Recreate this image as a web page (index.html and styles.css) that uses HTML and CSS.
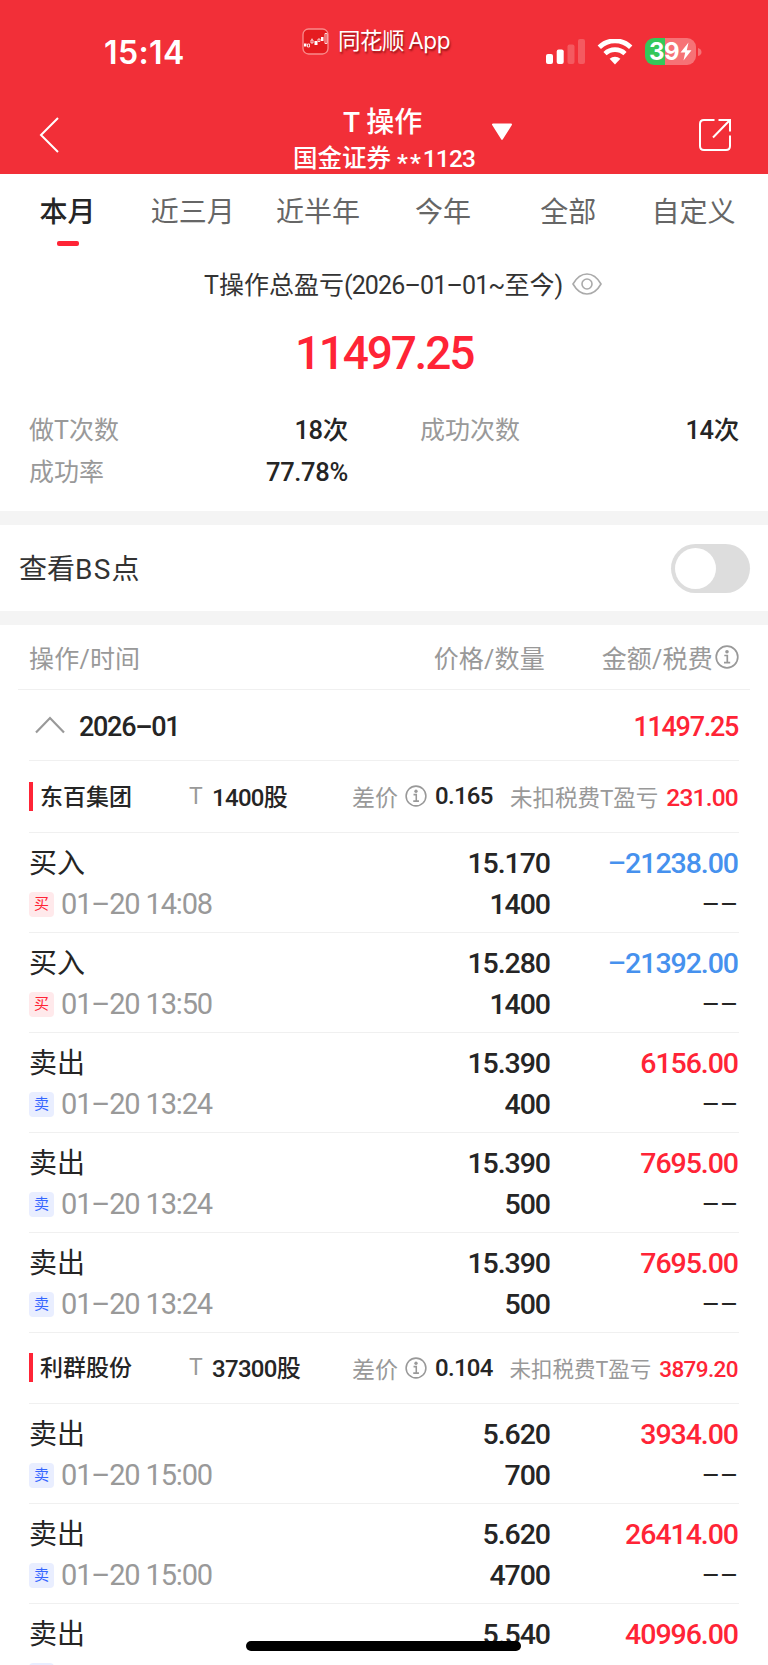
FILE: index.html
```html
<!DOCTYPE html>
<html lang="zh-CN">
<head>
    <meta charset="UTF-8">
    <meta name="viewport" content="width=device-width, initial-scale=1.0">
    <title>T操作</title>
    <link rel="stylesheet" href="styles.css">
</head>
<body>
    <svg class="defs" width="0" height="0">
        <symbol id="info" viewBox="0 0 24 24">
            <circle cx="12" cy="12" r="10.8" fill="none" stroke="currentColor" stroke-width="1.7"/>
            <circle cx="12" cy="6.8" r="1.8" fill="currentColor"/>
            <path d="M9.3 10.5h3v7M9 17.6h6.2" fill="none" stroke="currentColor" stroke-width="1.7"/>
        </symbol>
    </svg>

    <header class="header">
        <div class="status">
            <div class="time">15:14</div>
            <div class="app">
                <svg class="app-icon" width="27" height="27" viewBox="0 0 27 27">
                    <rect x="1" y="1" width="25" height="25" rx="5.5" fill="#e51c20" stroke="#f98b8b" stroke-width="1.3"/>
                    <path d="M2 15.500h2.500v3h-2.500zM12.500 13h3v4h-3zM19 9h2.500v4h-2.500z" fill="#fff"/>
                    <path d="M5.500 16h2v3h-2zM9 12h2v3h-2zM10 10.500v1.500M16 11h2v2.500h-2zM23 5.500h2v10h-2z" fill="none" stroke="#fff" stroke-width=".8"/>
                </svg>
                <span>同花顺 App</span>
            </div>
            <div class="signals">
                <svg width="40" height="26" viewBox="0 0 40 26">
                    <rect x="1" y="15" width="7" height="10" rx="2" fill="#fff"/>
                    <rect x="11.700" y="10.500" width="7" height="14.500" rx="2" fill="#fff"/>
                    <rect x="22.500" y="5.500" width="7" height="19.500" rx="2" fill="#f45a60"/>
                    <rect x="33" y="0" width="7" height="25" rx="2" fill="#f45a60"/>
                </svg>
                <svg class="wifi" width="36" height="26" viewBox="0 0 36 26">
                    <path d="M2.300 8.200a22.500 22.500 0 0 1 31.400 0" fill="none" stroke="#fff" stroke-width="4.800"/>
                    <path d="M8 14.600a14.500 14.500 0 0 1 20 0" fill="none" stroke="#fff" stroke-width="4.600"/>
                    <path d="M12.600 19.800a8 8 0 0 1 10.800 0L18 25.500z" fill="#fff"/>
                </svg>
                <div class="battery">
                    <span>39</span>
                    <svg width="12" height="19" viewBox="0 0 12 19"><path d="M8.500.5L.5 10.500h4.700L3.500 18.500l8-10.300H6.800z" fill="#fff"/></svg>
                </div>
                <svg class="battery-cap" width="4" height="10" viewBox="0 0 4 10"><path d="M0 1q3.500 1 3.500 4T0 9z" fill="#f67276"/></svg>
            </div>
        </div>
        <div class="nav">
            <svg class="back" width="22" height="38" viewBox="0 0 22 38"><path d="M20 2L3 19l17 17" fill="none" stroke="#fff" stroke-width="2"/></svg>
            <div class="nav-title">
                <h1>T 操作</h1>
                <p>国金证券 <span class="stars">**</span><span class="account">1123</span></p>
            </div>
            <svg class="caret" width="22" height="18" viewBox="0 0 22 18"><path d="M2 1.500h18L11 15.800z" fill="#fff" stroke="#fff" stroke-width="2" stroke-linejoin="round"/></svg>
            <svg class="share" width="34" height="34" viewBox="0 0 34 34"><path d="M16.500 2H6Q2 2 2 6v22q0 4 4 4h22q4 0 4-4V17.500M20.500 2H32v11.500M31.500 2.500L15 19.500" fill="none" stroke="#fff" stroke-width="2"/></svg>
        </div>
    </header>

    <nav class="tabs">
        <a class="active">本月</a>
        <a>近三月</a>
        <a>近半年</a>
        <a>今年</a>
        <a>全部</a>
        <a>自定义</a>
    </nav>

    <section class="summary">
        <div class="summary-title">
            <span>T操作总盈亏<span class="range">(2026–01–01~</span>至今)</span>
            <svg width="30" height="22" viewBox="0 0 30 22" fill="none" stroke="#aaa" stroke-width="1.600"><path d="M1 11C5 4 10 1 15 1s10 3 14 10c-4 7-9 10-14 10S5 18 1 11z"/><circle cx="15" cy="11" r="5"/></svg>
        </div>
        <div class="total">11497.25</div>
        <dl class="stats">
            <div><dt>做T次数</dt><dd>18次</dd></div>
            <div><dt>成功次数</dt><dd>14次</dd></div>
            <div><dt>成功率</dt><dd>77.78%</dd></div>
        </dl>
    </section>

    <section class="bs-row">
        <span>查看<span class="bs">BS</span>点</span>
        <div class="switch"></div>
    </section>

    <section class="list">
        <div class="list-head">
            <span>操作/时间</span>
            <span class="right">价格/数量</span>
            <span class="right">金额/税费<svg width="24" height="24"><use href="#info"/></svg></span>
        </div>

        <div class="month">
            <svg width="30" height="18" viewBox="0 0 30 18"><path d="M1 16.500L15 2l14 14.500" fill="none" stroke="#999" stroke-width="2.200"/></svg>
            <b>2026–01</b>
            <b class="red">11497.25</b>
        </div>

        <div class="stock">
            <span class="name">东百集团</span>
            <span class="t">T</span>
            <span class="qty">1400股</span>
            <span class="diff">差价<svg width="22" height="22"><use href="#info"/></svg></span>
            <span class="diff-num">0.165</span>
            <span class="profit">未扣税费T盈亏<b>231.00</b></span>
        </div>
        <div class="trade">
            <span class="op">买入</span><span class="num">15.170</span><span class="num blue">–21238.00</span>
            <span class="when"><i class="tag buy">买</i>01–20 14:08</span><span class="num">1400</span><span class="num dash">––</span>
        </div>
        <div class="trade">
            <span class="op">买入</span><span class="num">15.280</span><span class="num blue">–21392.00</span>
            <span class="when"><i class="tag buy">买</i>01–20 13:50</span><span class="num">1400</span><span class="num dash">––</span>
        </div>
        <div class="trade">
            <span class="op">卖出</span><span class="num">15.390</span><span class="num red">6156.00</span>
            <span class="when"><i class="tag sell">卖</i>01–20 13:24</span><span class="num">400</span><span class="num dash">––</span>
        </div>
        <div class="trade">
            <span class="op">卖出</span><span class="num">15.390</span><span class="num red">7695.00</span>
            <span class="when"><i class="tag sell">卖</i>01–20 13:24</span><span class="num">500</span><span class="num dash">––</span>
        </div>
        <div class="trade">
            <span class="op">卖出</span><span class="num">15.390</span><span class="num red">7695.00</span>
            <span class="when"><i class="tag sell">卖</i>01–20 13:24</span><span class="num">500</span><span class="num dash">––</span>
        </div>

        <div class="stock">
            <span class="name">利群股份</span>
            <span class="t">T</span>
            <span class="qty">37300股</span>
            <span class="diff">差价<svg width="22" height="22"><use href="#info"/></svg></span>
            <span class="diff-num">0.104</span>
            <span class="profit small">未扣税费T盈亏<b>3879.20</b></span>
        </div>
        <div class="trade">
            <span class="op">卖出</span><span class="num">5.620</span><span class="num red">3934.00</span>
            <span class="when"><i class="tag sell">卖</i>01–20 15:00</span><span class="num">700</span><span class="num dash">––</span>
        </div>
        <div class="trade">
            <span class="op">卖出</span><span class="num">5.620</span><span class="num red">26414.00</span>
            <span class="when"><i class="tag sell">卖</i>01–20 15:00</span><span class="num">4700</span><span class="num dash">––</span>
        </div>
        <div class="trade">
            <span class="op">卖出</span><span class="num">5.540</span><span class="num red">40996.00</span>
            <span class="when"><i class="tag sell">卖</i></span><span class="num">7400</span>
        </div>
    </section>

    <div class="home-bar"></div>
</body>
</html>
```
FILE: styles.css
```css
* {
    box-sizing: border-box;
}
html {
    overflow: hidden;
}
body {
    margin: 0;
    height: 1665px;
    overflow: hidden;
    position: relative;
    background-color: #fff;
    color: #252525;
    font-family: Roboto, "Noto Sans CJK SC", sans-serif;
    font-size: 25px;
}
svg {
    display: block;
    flex: none;
}
.defs {
    position: absolute;
}
h1, p, dl, dd {
    margin: 0;
}
.red { color: #ff2436; }
.blue { color: #4691ee; }

/* header */
.header {
    height: 174px;
    background-color: #f22f38;
    color: #fff;
}
.status {
    height: 100px;
    display: grid;
    grid-template-columns: 302px 243px 1fr;
}
.time {
    padding: 33px 0 0 104px;
    font: 600 32px/40px Inter, sans-serif;
    letter-spacing: 0.4px;
}
.app {
    display: flex;
    gap: 9px;
    height: 28px;
    margin-top: 27px;
    align-items: center;
    font: 22.500px/28px Inter, "Noto Sans CJK SC", sans-serif;
    letter-spacing: -0.500px;
    word-spacing: -1.500px;
    white-space: nowrap;
    text-shadow: 1px 2px 2px rgba(90, 0, 0, 0.6);
}
.signals {
    display: flex;
    margin-top: 38px;
    height: 27px;
}
.signals svg {
    margin-top: 1px;
}
.signals .wifi {
    margin-left: 12px;
}
.battery {
    display: flex;
    align-items: center;
    width: 51px;
    height: 27px;
    margin-left: 12px;
    padding-left: 4px;
    border-radius: 9px;
    background: linear-gradient(to right, #34c759 20px, #f67276 20px);
    font: bold 24px/27px Inter, sans-serif;
    letter-spacing: -0.5px;
}
.battery svg {
    margin: 0 0 0 1px;
}
.signals .battery-cap {
    margin: 9px 0 0 2px;
}
.nav {
    display: grid;
    grid-template-columns: 284px 206px 208px 1fr;
}
.back {
    margin: 16px 0 0 38px;
}
.nav-title {
    text-align: left;
    white-space: nowrap;
}
.nav-title h1 {
    padding: 1px 0 0 59px;
    font-size: 28px;
    font-weight: 500;
    line-height: 44px;
}
.nav-title p {
    padding-left: 9px;
    font-size: 24.500px;
    line-height: 27px;
    font-weight: 500;
}
.nav-title .stars {
    letter-spacing: 2px;
    position: relative;
    top: 4px;
}
.account {
    letter-spacing: -0.900px;
}
.caret {
    margin: 23px 0 0 1px;
}
.share {
    margin-top: 18px;
}

/* tabs */
.tabs {
    display: grid;
    grid-template-columns: repeat(6, 1fr);
    height: 76px;
    padding: 0 12px 0 5px;
}
.tabs a {
    display: flex;
    flex-direction: column;
    align-items: center;
    padding-top: 19px;
    font-size: 28px;
    line-height: 40px;
    color: #666;
}
.tabs .active {
    color: #252525;
    font-weight: 500;
}
.tabs .active::after {
    content: "";
    width: 22px;
    height: 5px;
    margin-top: 8px;
    border-radius: 2px;
    background-color: #ff2436;
}

/* summary */
.summary {
    height: 275px;
    border-bottom: 14px solid #f4f4f4;
}
.summary-title {
    display: flex;
    align-items: center;
    gap: 9px;
    height: 68px;
    padding-left: 204px;
    color: #333;
}
.summary-title > span {
    margin-top: -3px;
    white-space: nowrap;
}
.summary-title .range {
    letter-spacing: -0.850px;
}
.total {
    height: 92px;
    padding-top: 5px;
    text-align: center;
    font-size: 46px;
    line-height: 60px;
    font-weight: 500;
    letter-spacing: -2.200px;
    color: #ff2436;
}
.stats {
    display: grid;
    grid-template-columns: 319px 319px;
    column-gap: 72px;
    padding-left: 29px;
}
.stats div {
    display: flex;
    justify-content: space-between;
    line-height: 42px;
}
.stats dt {
    color: #999;
}
.stats dd {
    margin-top: -1px;
    font-size: 25.500px;
    font-weight: 500;
    letter-spacing: -0.300px;
}

/* switch row */
.bs-row {
    display: flex;
    align-items: center;
    justify-content: space-between;
    height: 100px;
    padding: 0 18px 0 19px;
    border-bottom: 14px solid #f4f4f4;
    font-size: 28px;
    color: #333;
}
.bs-row > span {
    margin-top: -2px;
}
.bs {
    letter-spacing: 1.200px;
}
.switch {
    width: 79px;
    height: 49px;
    padding: 4px;
    border-radius: 25px;
    background-color: #ddd;
}
.switch::before {
    content: "";
    display: block;
    width: 41px;
    height: 41px;
    border-radius: 50%;
    background-color: #fff;
}

/* list */
.list-head, .trade {
    display: grid;
    grid-template-columns: 321px 200px 188px;
}
.list-head {
    height: 65px;
    margin: 0 18px;
    padding: 0 11px;
    grid-template-columns: 316px 195px;
    grid-template-columns: 316px 200px 194px;
    align-items: center;
    border-bottom: 1px solid #f0f0f0;
    color: #999;
    letter-spacing: 0.200px;
}
.list-head .right {
    display: flex;
    justify-content: flex-end;
    gap: 2px;
}
.list-head svg {
    margin-top: 6px;
}
.month, .stock, .trade {
    margin: 0 29px;
    border-bottom: 1px solid #f0f0f0;
}
.month {
    display: flex;
    align-items: center;
    height: 71px;
    padding: 0 1px 0 6px;
    font-size: 27px;
}
.month b {
    margin: 3px 0 0 14px;
    font-weight: 500;
    letter-spacing: -1.300px;
}
.month .red {
    margin-left: auto;
}
.stock {
    display: grid;
    grid-template-columns: 160px 23px 140px 83px 64px 239px;
    align-items: center;
    height: 71.500px;
    font-size: 23px;
    white-space: nowrap;
}
.stock .name {
    height: 29px;
    border-left: 4px solid #ff2436;
    padding-left: 7px;
    line-height: 31px;
    font-weight: 500;
}
.stock .t {
    color: #999;
}
.stock .qty, .stock .diff-num {
    margin-top: -2px;
    font-size: 24px;
    font-weight: 500;
    letter-spacing: -0.700px;
}
.stock .diff-num {
    margin-top: 0;
}
.stock .diff {
    display: flex;
    align-items: center;
    gap: 7px;
    color: #999;
}
.stock .profit {
    font-size: 22.500px;
    text-align: right;
    color: #999;
}
.stock .profit b {
    margin-left: 8px;
    font-size: 24.500px;
    font-weight: 500;
    letter-spacing: -0.800px;
    color: #ff2436;
}
.stock .small {
    font-size: 21.500px;
}
.stock .small b {
    font-size: 22.500px;
    letter-spacing: -0.600px;
}
.trade {
    height: 100px;
    padding-top: 10px;
    grid-template-rows: 41px 41px;
    line-height: 41px;
}
.trade .op {
    font-size: 28px;
}
.trade .num {
    font-size: 28.500px;
    font-weight: 500;
    letter-spacing: -1.050px;
    text-align: right;
}
.trade .dash {
    font-weight: 400;
    letter-spacing: -0.500px;
}
.when {
    display: flex;
    align-items: center;
    gap: 7px;
    font-size: 29px;
    letter-spacing: -1.150px;
    color: #999;
}
.tag {
    width: 25px;
    height: 25px;
    border-radius: 4px;
    font-size: 15px;
    line-height: 25px;
    font-style: normal;
    letter-spacing: 0;
    text-align: center;
}
.tag.buy {
    background-color: #ffe9eb;
    color: #ff2436;
}
.tag.sell {
    background-color: #e9eeff;
    color: #3566ff;
}

.home-bar {
    position: absolute;
    left: 246px;
    bottom: 14px;
    width: 275px;
    height: 10px;
    border-radius: 5px;
    background-color: #000;
}
```
